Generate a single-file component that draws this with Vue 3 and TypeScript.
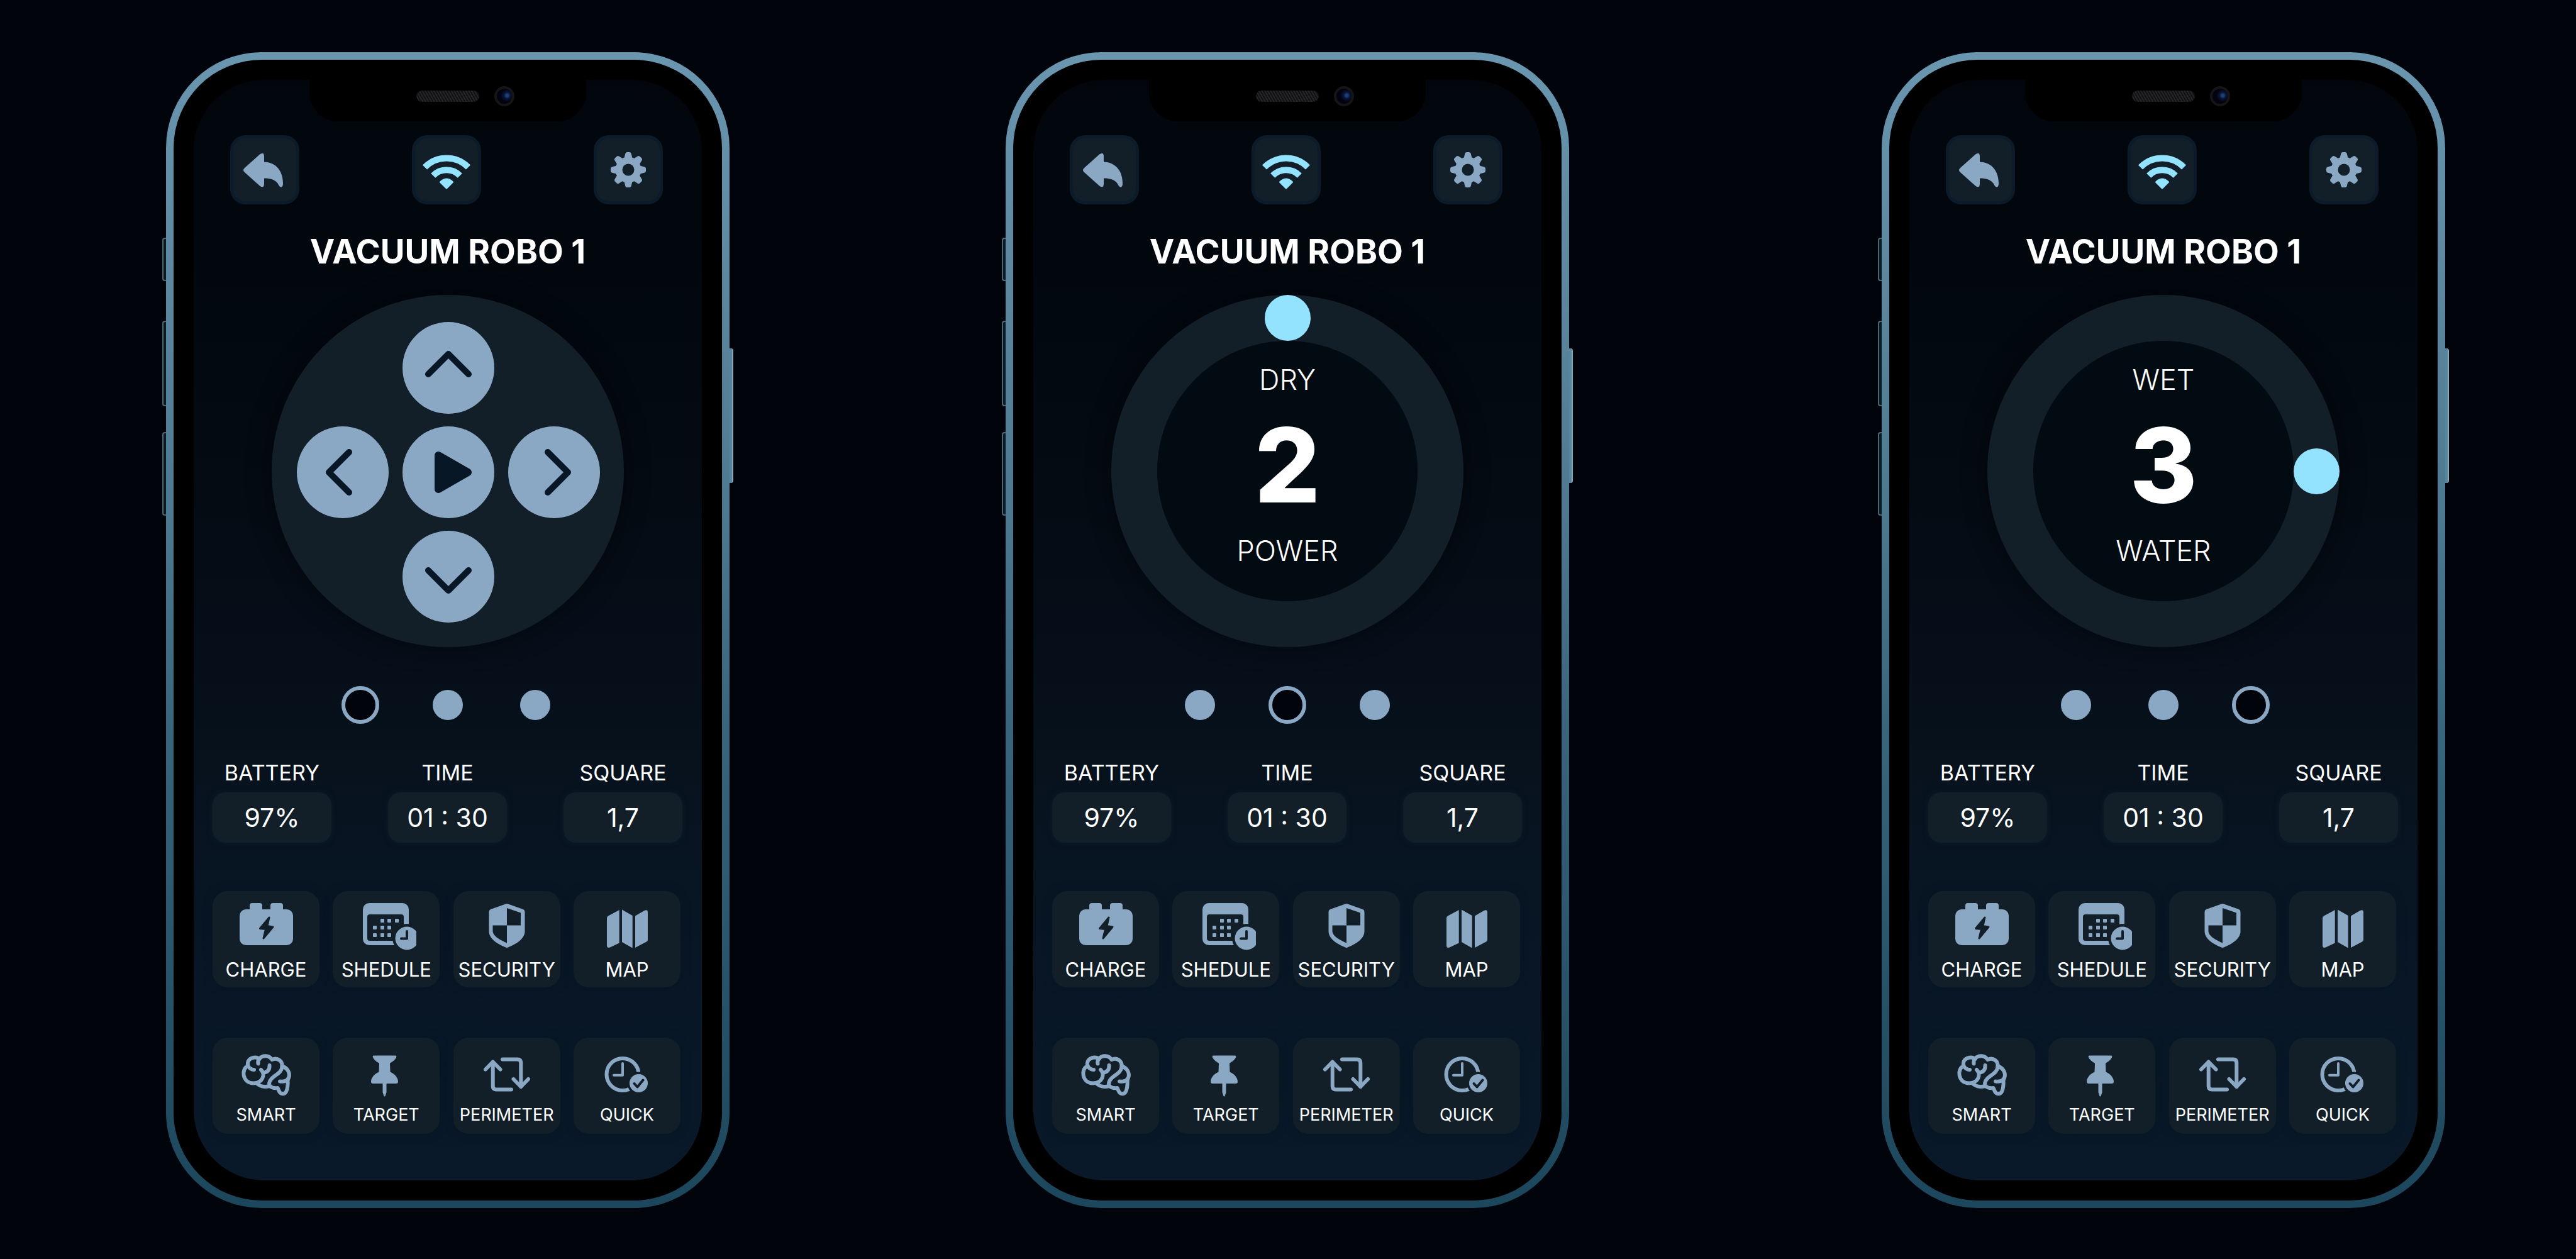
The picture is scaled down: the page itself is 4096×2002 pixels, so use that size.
<script setup lang="ts">
import { reactive } from 'vue'

type Mode = 'drive' | 'dry' | 'wet'

interface Phone {
  mode: Mode
  page: number
  top?: string
  level?: number
  bottom?: string
}

interface Action {
  icon: string
  label: string
}

const phones = reactive<Phone[]>([
  { mode: 'drive', page: 0 },
  { mode: 'dry', page: 1, top: 'DRY', level: 2, bottom: 'POWER' },
  { mode: 'wet', page: 2, top: 'WET', level: 3, bottom: 'WATER' },
])

const pageNames = ['Drive', 'Dry cleaning', 'Wet cleaning']

const stats = [
  { label: 'BATTERY', value: '97%' },
  { label: 'TIME', value: '01 : 30' },
  { label: 'SQUARE', value: '1,7' },
]

const mainActions: Action[] = [
  { icon: 'battery', label: 'CHARGE' },
  { icon: 'calendar', label: 'SHEDULE' },
  { icon: 'shield', label: 'SECURITY' },
  { icon: 'map', label: 'MAP' },
]

const modeActions: Action[] = [
  { icon: 'brain', label: 'SMART' },
  { icon: 'pin', label: 'TARGET' },
  { icon: 'loop', label: 'PERIMETER' },
  { icon: 'clock', label: 'QUICK' },
]

const pad = [
  { dir: 'up', angle: 0 },
  { dir: 'left', angle: 270 },
  { dir: 'play', angle: 0 },
  { dir: 'right', angle: 90 },
  { dir: 'down', angle: 180 },
]

const teeth = [0, 45, 90, 135, 180, 225, 270, 315]

const calendarCells = [
  [42, 31], [53, 31], [65, 31],
  [30, 42], [42, 42], [53, 42],
  [30, 54], [42, 54], [53, 54],
]
</script>

<template>
  <main class="stage">
    <section v-for="(phone, i) in phones" :key="phone.mode" class="phone" :class="`phone-${i + 1}`">
      <span class="side side-mute"></span>
      <span class="side side-up"></span>
      <span class="side side-down"></span>
      <span class="side side-power"></span>
      <div class="bezel">
        <div class="screen">
          <div class="notch">
            <span class="speaker"></span>
            <span class="camera"></span>
          </div>

          <header class="toolbar">
            <button type="button" class="tool" aria-label="Back">
              <svg viewBox="0 0 80 80">
                <path class="fill" d="M8 37 L32 15.500 Q39 10.500 39 19 V27.500 C58 28 69 42 69 62 C69 69 64 69 62 64 C58 56 50 53.500 39 53.500 V62 Q39 70.500 32 65.500 L8 44 Q4 40.500 8 37Z" />
              </svg>
            </button>
            <button type="button" class="tool" aria-label="Wi-Fi">
              <svg viewBox="0 0 80 80" class="bright">
                <path class="arc" d="M5.500 36 A48.500 48.500 0 0 1 74.500 36" />
                <path class="arc" d="M18.700 49.200 A30 30 0 0 1 61.300 49.200" />
                <path class="wedge" d="M40 69 L30.500 59.500 Q40 50.500 49.500 59.500Z" />
              </svg>
            </button>
            <button type="button" class="tool" aria-label="Settings">
              <svg viewBox="0 0 80 80">
                <circle class="fill" cx="40" cy="40" r="20.500" />
                <path
                  v-for="t in teeth"
                  :key="t"
                  class="fill"
                  d="M33 24 L35.200 14.500 Q35.700 12 38 12 H42 Q44.300 12 44.800 14.500 L47 24Z"
                  :transform="`rotate(${t} 40 40)`"
                />
                <circle class="hole" cx="40" cy="40" r="9.500" />
              </svg>
            </button>
          </header>

          <h1 class="title">VACUUM ROBO 1</h1>

          <div v-if="phone.mode === 'drive'" class="dial">
            <div class="pad">
              <button
                v-for="key in pad"
                :key="key.dir"
                type="button"
                class="key"
                :class="key.dir"
                :aria-label="key.dir"
              >
                <svg viewBox="-73 -73 146 146">
                  <path v-if="key.dir === 'play'" class="play" d="M-16 -27 L31 0 L-16 27Z" />
                  <path v-else class="chevron" d="M-32 10 L0 -22 L32 10" :transform="`rotate(${key.angle})`" />
                </svg>
              </button>
            </div>
          </div>
          <div v-else class="dial ring">
            <div class="readout">
              <span class="caption">{{ phone.top }}</span>
              <strong class="level">{{ phone.level }}</strong>
              <span class="caption">{{ phone.bottom }}</span>
            </div>
            <button type="button" class="knob" :class="phone.mode" :aria-label="`${phone.bottom} level`"></button>
          </div>

          <div class="dots" role="radiogroup" aria-label="Page">
            <label v-for="(name, p) in pageNames" :key="name" class="dot">
              <input v-model="phone.page" type="radio" :name="`page-${i}`" :value="p" :aria-label="name" />
            </label>
          </div>

          <dl class="stats">
            <div v-for="s in stats" :key="s.label" class="stat">
              <dt>{{ s.label }}</dt>
              <dd>{{ s.value }}</dd>
            </div>
          </dl>

          <nav class="actions">
            <button v-for="a in mainActions" :key="a.icon" type="button" class="card main">
              <svg viewBox="0 0 96 80">
                <g v-if="a.icon === 'battery'">
                  <rect class="fill" x="6" y="13" width="85" height="57" rx="10" />
                  <rect class="fill" x="22" y="3" width="20" height="20" rx="4" />
                  <rect class="fill" x="55" y="3" width="20" height="20" rx="4" />
                  <path class="bolt" d="M53 26 L38.500 43.500 L47.500 44.500 L44 59 L59 41 L50 39.500Z" />
                </g>
                <g v-else-if="a.icon === 'calendar'">
                  <rect class="fill" x="11" y="3" width="73" height="67" rx="10" />
                  <rect class="hole" x="18" y="21" width="58" height="42" rx="4" />
                  <rect v-for="(c, n) in calendarCells" :key="n" class="fill" :x="c[0] - 3" :y="c[1] - 3" width="6" height="6" rx="1" />
                  <circle class="hole" cx="81" cy="59" r="23" />
                  <circle class="fill" cx="81" cy="59" r="18.500" />
                  <path class="cut" d="M81 48 V59.500 H72" />
                </g>
                <g v-else-if="a.icon === 'shield'">
                  <path class="fill" d="M46 4.500 Q48 3.700 50 4.500 L74 13 Q76.500 14 76.500 17 V48 C76.500 62 57 70.500 50 73.500 Q48 74.300 46 73.500 C39 70.500 19.500 62 19.500 48 V17 Q19.500 14 22 13Z" />
                  <path class="hole" d="M48 11 L70 18.500 V38.500 H48Z" />
                  <path class="hole" d="M25.500 38.500 H48 V66.500 C38 62 25.500 56 25.500 47Z" />
                </g>
                <g v-else>
                  <path class="fill" d="M35.700 14 V66.400 L21 73.500 Q16 75 16 70.500 V27 Q16 24.500 18 23.500Z" />
                  <path class="fill" d="M40 13.500 L56.700 23 V74.400 L40 65Z" />
                  <path class="fill" d="M61 23.500 L76 14.800 Q81 13 81 17.500 V61.500 Q81 63.500 79 64.500 L61 74Z" />
                </g>
              </svg>
              <span>{{ a.label }}</span>
            </button>
          </nav>

          <nav class="actions modes">
            <button v-for="a in modeActions" :key="a.icon" type="button" class="card mode">
              <svg viewBox="0 0 96 80">
                <g v-if="a.icon === 'brain'" class="line">
                  <path d="M19.500 25 C8 29 10 52.500 28 52.500 C43 52 47.500 38 40 31" />
                  <path d="M29 31 C24 31 18 27 19 20 C20 13 30 9 37.500 13.500 C42 7.500 53 7.500 57.500 15 C66 11 75 17 73.500 27 C72 37 62 39 57 45 C52.500 50 52.500 54 54 57" />
                  <path d="M37.500 14 C35 16 35 19 35.500 21.500" />
                  <path d="M53.500 24 C54 31 51 35 43.500 36" />
                  <path d="M73.500 25.500 C82 28 87 36 84 44 C83 48 77 50.500 70 49.500" />
                  <path d="M82.500 46 C83 54 82 62 80 66 C77 71 70.500 70 68.500 64.500 L66.500 60 C60 61 57 59.500 54 57 C46 59 38 57.500 33 52.500" />
                </g>
                <g v-else-if="a.icon === 'pin'">
                  <path class="fill" d="M28 8.500 H63 Q65 9 64 11.500 C61 17 57 18.500 54 21 L54.500 34.500 C62 38 67 44 67 50 Q67 53 64 53 H27 Q24 53 24 50 C24 44 29 38 36.500 34.500 L37 21 C34 18.500 30 17 27 11.500 Q26 9 28 8.500Z" />
                  <path class="fill" d="M42.500 52 H48.500 V67 L46.500 73 Q45.500 74 44.500 73 L42.500 67Z" />
                </g>
                <g v-else-if="a.icon === 'loop'" class="line">
                  <path d="M14 30.500 L25.700 18.500 L37.500 30.500" />
                  <path d="M25.700 19 V57 Q25.700 62.500 31 62.500 H55" />
                  <path d="M41 14.500 H65 Q70.300 14.500 70.300 20 V58" />
                  <path d="M58.500 46 L70.300 58 L82 46" />
                </g>
                <g v-else>
                  <circle class="clock-face" cx="41" cy="38.500" r="25.500" />
                  <path class="clock-hand" d="M41 21 V39.700 H27" />
                  <circle class="hole" cx="66.500" cy="52.500" r="18" />
                  <circle class="fill" cx="66.500" cy="52.500" r="14.500" />
                  <path class="cut" d="M59.500 53 L64.500 58.500 L73.500 47.500" />
                </g>
              </svg>
              <span>{{ a.label }}</span>
            </button>
          </nav>
        </div>
      </div>
    </section>
  </main>
</template>

<style>
body {
  margin: 0;
  background: #02040b;
}
</style>

<style scoped>
.stage {
  --steel: #8aa8c4;
  --bright: #93e2fe;
  --panel: #121f29;
  --ink: #071726;
  display: grid;
  grid-template-columns: 264fr 896px 439fr 896px 497fr 896px 208fr;
  min-height: 100vh;
  box-sizing: border-box;
  padding: 83px 0 81px;
  align-items: start;
  background: #02040b;
  color: #fff;
  font-family: Inter, "Open Sans", sans-serif;
}

button {
  margin: 0;
  padding: 0;
  border: 0;
  color: inherit;
  font: inherit;
  cursor: pointer;
}

svg {
  display: block;
}

.phone {
  position: relative;
  padding: 12px;
  border-radius: 152px;
  background: linear-gradient(#6b96b0 0%, #5c879f 20%, #4c7990 40%, #3a667d 58%, #28546b 80%, #1c465b 100%);
}

.phone-1 { grid-column: 2; }
.phone-2 { grid-column: 4; }
.phone-3 { grid-column: 6; }

.side {
  position: absolute;
  left: -6px;
  width: 6px;
  box-sizing: border-box;
  border: 2px solid #4d6672;
  border-right: 0;
  border-radius: 4px 0 0 4px;
  background: #0c1a24;
}

.side-mute { top: 295px; height: 69px; }
.side-up { top: 427px; height: 136px; }
.side-down { top: 604px; height: 133px; }

.side-power {
  top: 471px;
  left: auto;
  right: -6px;
  height: 214px;
  border: 0;
  border-right: 2px solid #83a9bd;
  border-radius: 0 4px 4px 0;
  background: #5a8499;
}

.bezel {
  padding: 32px;
  border-radius: 140px;
  background: #000;
}

.screen {
  position: relative;
  padding: 88px 0 74px;
  border-radius: 112px;
  background: linear-gradient(#02050c 0%, #02080f 20%, #040b13 38%, #050d18 50%, #07121d 62%, #081625 80%, #0a1929 100%);
}

.notch {
  position: absolute;
  top: 0;
  left: 50%;
  width: 440px;
  height: 66px;
  margin-left: -220px;
  border-radius: 0 0 46px 46px;
  background: #000;
}

.speaker {
  position: absolute;
  top: 17px;
  left: 170px;
  width: 100px;
  height: 18px;
  border-radius: 9px;
  background: repeating-linear-gradient(60deg, #242426 0 2px, #121214 2px 4px);
}

.camera {
  position: absolute;
  top: 10px;
  left: 294px;
  width: 32px;
  height: 32px;
  box-sizing: border-box;
  border: 4px solid #151515;
  border-radius: 50%;
  background: radial-gradient(circle at 68% 45%, #1d3f74 0 2px, #09153c 5px, #02030f 10px);
}

.toolbar {
  display: flex;
  justify-content: space-between;
  padding: 0 62px 0 58px;
}

.tool {
  display: flex;
  align-items: center;
  justify-content: center;
  width: 110px;
  height: 110px;
  box-sizing: border-box;
  border: 5px solid #0c1b29;
  border-radius: 24px;
  background: var(--panel);
}

.tool svg {
  width: 80px;
  height: 80px;
}

.fill { fill: var(--steel); }
.hole { fill: var(--panel); }
.arc { fill: none; stroke: var(--bright); stroke-width: 10; }
.wedge { fill: var(--bright); stroke: var(--bright); stroke-width: 3; stroke-linejoin: round; }

.title {
  margin: 45px 0 39px;
  font-size: 53px;
  font-weight: 700;
  line-height: 60px;
  text-align: center;
}

.dial {
  position: relative;
  display: flex;
  align-items: center;
  justify-content: center;
  width: 560px;
  height: 560px;
  margin: 0 auto;
  border-radius: 50%;
  background: var(--panel);
  box-shadow: 0 0 40px rgba(0, 0, 0, 0.45);
}

.pad {
  display: grid;
  grid-template-columns: repeat(3, 146px);
  grid-template-areas: ". up ." "left play right" ". down .";
  gap: 20px 22px;
  padding: 4px 0 0 2px;
}

.key {
  width: 146px;
  height: 146px;
  border-radius: 50%;
  background: var(--steel);
}

.up { grid-area: up; }
.left { grid-area: left; }
.play { grid-area: play; }
.right { grid-area: right; }
.down { grid-area: down; }

.chevron {
  fill: none;
  stroke: var(--ink);
  stroke-width: 10;
  stroke-linecap: round;
  stroke-linejoin: round;
}

path.play {
  fill: var(--ink);
  stroke: var(--ink);
  stroke-width: 12;
  stroke-linejoin: round;
}

.readout {
  display: flex;
  flex-direction: column;
  align-items: center;
  justify-content: center;
  width: 414px;
  height: 414px;
  box-sizing: border-box;
  padding-bottom: 18px;
  border-radius: 50%;
  background: #020a12;
}

.caption {
  font-size: 45px;
  font-weight: 300;
  line-height: 48px;
}

.level {
  font-size: 164px;
  font-weight: 800;
  line-height: 224px;
}

.knob {
  position: absolute;
  width: 73px;
  height: 73px;
  border-radius: 50%;
  background: var(--bright);
}

.knob.dry { top: 0; }
.knob.wet { right: 0; }

.dots {
  display: flex;
  justify-content: center;
  gap: 79px;
  margin-top: 62px;
}

.dot {
  display: flex;
  align-items: center;
  justify-content: center;
  width: 60px;
  height: 60px;
}

.dot input {
  appearance: none;
  width: 48px;
  height: 48px;
  margin: 0;
  box-sizing: border-box;
  border-radius: 50%;
  background: var(--steel);
}

.dot input:checked {
  width: 60px;
  height: 60px;
  border: 6px solid var(--steel);
  background: #02040c;
}

.stats {
  display: flex;
  justify-content: space-between;
  margin: 58px 0 77px;
  padding: 0 31px 0 30px;
}

.stat {
  width: 189px;
  text-align: center;
}

.stat dt {
  font-size: 34px;
  font-weight: 400;
  line-height: 40px;
}

.stat dd {
  margin: 11px 0 0;
  border-radius: 20px;
  background: var(--panel);
  box-shadow: 0 0 8px #0c1d2b;
  font-size: 41px;
  font-weight: 400;
  line-height: 80px;
}

.actions {
  display: grid;
  grid-template-columns: repeat(4, 170px);
  justify-content: space-between;
  padding: 0 34px 0 30px;
}

.modes {
  margin-top: 80px;
}

.card {
  display: flex;
  flex-direction: column;
  align-items: center;
  border-radius: 24px;
  background: var(--panel);
  box-shadow: 0 0 14px #071625;
  font-weight: 400;
  line-height: 30px;
}

.card svg {
  width: 96px;
  height: 80px;
}

.card.main {
  gap: 14px;
  padding: 16px 0 13px;
  font-size: 31px;
}

.card.mode {
  gap: 8px;
  padding: 20px 0 15px;
  font-size: 27px;
}

.bolt {
  fill: var(--panel);
  stroke: var(--panel);
  stroke-width: 3;
  stroke-linejoin: round;
}

.cut {
  fill: none;
  stroke: var(--panel);
  stroke-width: 4;
  stroke-linecap: round;
  stroke-linejoin: round;
}

.line {
  fill: none;
  stroke: var(--steel);
  stroke-width: 6;
  stroke-linecap: round;
  stroke-linejoin: round;
}

.clock-face {
  fill: none;
  stroke: var(--steel);
  stroke-width: 6;
}

.clock-hand {
  fill: none;
  stroke: var(--steel);
  stroke-width: 4;
  stroke-linecap: round;
  stroke-linejoin: round;
}
</style>
